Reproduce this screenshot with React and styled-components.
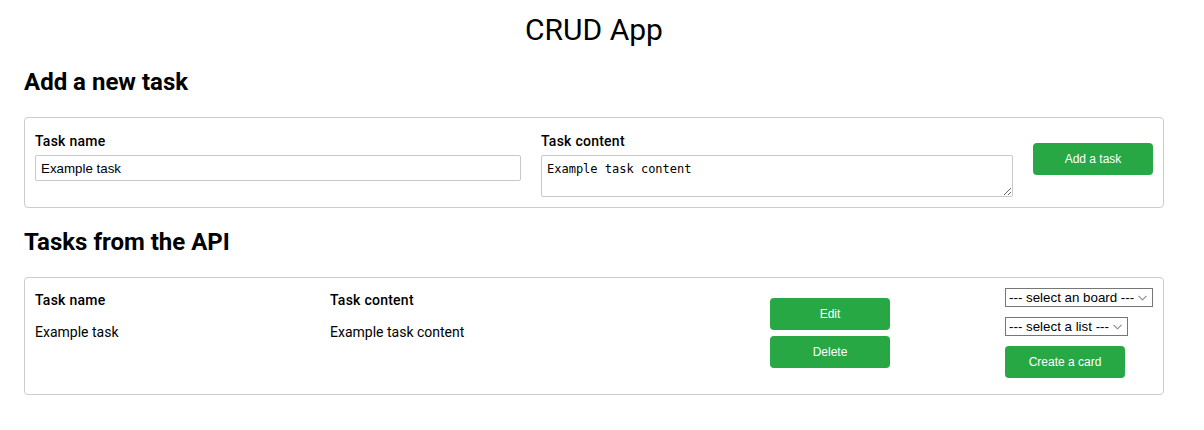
import React from "react";
import styled, { createGlobalStyle } from "styled-components";

const GlobalStyle = createGlobalStyle`
  html, body { margin: 0; padding: 0; background: #fff; }
  body { font-family: Roboto, "Liberation Sans", Arial, sans-serif; color: #000; }
  * { box-sizing: border-box; }
`;

const Page = styled.div`
  width: 1140px;
  margin-left: 24px;
  padding-top: 12px;
`;

const Title = styled.h1`
  margin: 0;
  text-align: center;
  font-size: 30px;
  font-weight: 400;
  line-height: 36px;
`;

const SectionTitle = styled.h2`
  margin: ${(p) => p.$top}px 0 20px;
  font-size: 24px;
  font-weight: 700;
  line-height: 29px;
`;

const Panel = styled.div`
  border: 1px solid #ccc;
  border-radius: 4px;
  padding: 10px;
  display: grid;
  grid-template-columns: ${(p) => p.$cols};
  column-gap: ${(p) => p.$gap || 0}px;
  align-items: start;
`;

const Field = styled.div`
  display: flex;
  flex-direction: column;
`;

const Label = styled.label`
  font-size: 14px;
  font-weight: 500;
  line-height: 24px;
  letter-spacing: 0.25px;
  padding-top: 1px;
  margin-bottom: 2px;
`;

const TextInput = styled.input`
  height: 26px;
  width: 100%;
  border: 1px solid #c8c8c8;
  border-radius: 2px;
  padding: 0 5px;
  font-family: "Liberation Sans", Arial, sans-serif;
  font-size: 13.33px;
  color: #000;
  outline: none;
`;

const TextArea = styled.textarea`
  height: 42px;
  width: 100%;
  border: 1px solid #c8c8c8;
  border-radius: 2px;
  padding: 6px 5px;
  font-family: "DejaVu Sans Mono", "Liberation Mono", monospace;
  font-size: 12px;
  color: #000;
  outline: none;
  display: block;
`;

const Button = styled.button`
  display: block;
  width: 120px;
  height: 32px;
  border: none;
  border-radius: 4px;
  background: #28a745;
  color: #fff;
  font-family: "Liberation Sans", Arial, sans-serif;
  font-size: 12px;
  margin-top: ${(p) => p.$top || 0}px;
  cursor: pointer;
`;

const Col = styled.div`
  display: flex;
  flex-direction: column;
  align-items: flex-start;
  gap: ${(p) => p.$gap || 0}px;
  padding-top: ${(p) => p.$top || 0}px;
  padding-bottom: ${(p) => p.$bottom || 0}px;
`;

const HeadCell = styled.div`
  font-size: 14px;
  font-weight: 500;
  line-height: 24px;
  letter-spacing: 0.25px;
`;

const Cell = styled.div`
  font-size: 14px;
  line-height: 24px;
  margin-top: 8px;
`;

const SelectWrap = styled.div`
  position: relative;
  width: ${(p) => p.$w}px;
  margin-bottom: ${(p) => p.$mb || 0}px;
`;

const Select = styled.select`
  display: block;
  appearance: none;
  -webkit-appearance: none;
  width: 100%;
  height: 19px;
  border: 1px solid #767676;
  border-radius: 0;
  background: #fff;
  padding: 0 0 0 3px;
  font-family: "Liberation Sans", Arial, sans-serif;
  font-size: 13.33px;
  line-height: 17px;
  color: #000;
  outline: none;
`;

const Chevron = styled.svg`
  position: absolute;
  right: 6px;
  top: 7px;
  pointer-events: none;
`;

const Dropdown = ({ w, mb, label }) => (
  <SelectWrap $w={w} $mb={mb}>
    <Select defaultValue="">
      <option value="">{label}</option>
    </Select>
    <Chevron width="9" height="6" viewBox="0 0 9 6">
      <path d="M0.5 0.8 L4.5 4.8 L8.5 0.8" fill="none" stroke="#888" strokeWidth="1.1" />
    </Chevron>
  </SelectWrap>
);

export default function App() {
  return (
    <>
      <GlobalStyle />
      <Page>
        <Title>CRUD App</Title>
        <SectionTitle $top={20}>Add a new task</SectionTitle>
        <Panel $cols="486px 472px 120px" $gap={20}>
          <Field>
            <Label>Task name</Label>
            <TextInput defaultValue="Example task" />
          </Field>
          <Field>
            <Label>Task content</Label>
            <TextArea defaultValue="Example task content" />
          </Field>
          <Button $top={15}>Add a task</Button>
        </Panel>
        <SectionTitle $top={20}>Tasks from the API</SectionTitle>
        <Panel $cols="295px 440px 235px 148px">
          <Col>
            <HeadCell>Task name</HeadCell>
            <Cell>Example task</Cell>
          </Col>
          <Col>
            <HeadCell>Task content</HeadCell>
            <Cell>Example task content</Cell>
          </Col>
          <Col $top={10} $gap={6}>
            <Button>Edit</Button>
            <Button>Delete</Button>
          </Col>
          <Col $bottom={6}>
            <Dropdown w={148} mb={10} label="--- select an board ---" />
            <Dropdown w={123} mb={10} label="--- select a list ---" />
            <Button>Create a card</Button>
          </Col>
        </Panel>
      </Page>
    </>
  );
}
